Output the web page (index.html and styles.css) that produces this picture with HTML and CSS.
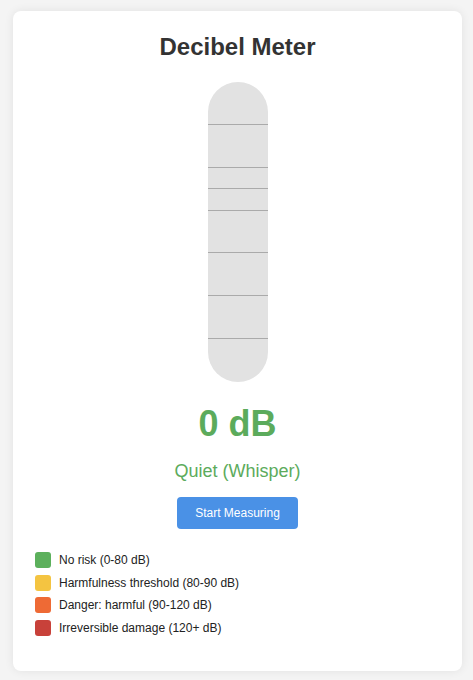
FILE: index.html
```html
<!DOCTYPE html>
<html lang="en">
<head>
<meta charset="utf-8">
<title>Decibel Meter</title>
<link rel="stylesheet" href="styles.css">
</head>
<body>
<div class="card">
  <h1 class="title">Decibel Meter</h1>
  <div class="meter">
    <div class="mark" style="bottom:14.286%"></div>
    <div class="mark" style="bottom:28.571%"></div>
    <div class="mark" style="bottom:42.857%"></div>
    <div class="mark" style="bottom:57.143%"></div>
    <div class="mark" style="bottom:64.286%"></div>
    <div class="mark" style="bottom:71.429%"></div>
    <div class="mark" style="bottom:85.714%"></div>
  </div>
  <div class="value">0 dB</div>
  <div class="status">Quiet (Whisper)</div>
  <button class="btn">Start Measuring</button>
  <ul class="legend">
    <li class="legend-item"><span class="swatch green"></span>No risk (0-80 dB)</li>
    <li class="legend-item"><span class="swatch yellow"></span>Harmfulness threshold (80-90 dB)</li>
    <li class="legend-item"><span class="swatch orange"></span>Danger: harmful (90-120 dB)</li>
    <li class="legend-item"><span class="swatch red"></span>Irreversible damage (120+ dB)</li>
  </ul>
</div>
</body>
</html>
```
FILE: styles.css
```css
html, body {
  margin: 0;
  padding: 0;
}
body {
  background: #f4f4f4;
  font-family: "Liberation Sans", Arial, Helvetica, sans-serif;
  color: #333;
  padding: 11px 0 9px 13px;
}
.card {
  width: 449px;
  height: 660px;
  box-sizing: border-box;
  background: #fff;
  border-radius: 8px;
  box-shadow: 0 0 10px rgba(0, 0, 0, 0.08);
  padding: 22px 22px 0 22px;
  display: flex;
  flex-direction: column;
  align-items: center;
}
.title {
  margin: 0;
  font-size: 24px;
  font-weight: bold;
  color: #333;
  line-height: 28px;
}
.meter {
  position: relative;
  margin-top: 21px;
  width: 60px;
  height: 300px;
  border-radius: 30px;
  background: #e2e2e2;
  overflow: hidden;
}
.mark {
  position: absolute;
  left: 0;
  right: 0;
  height: 1px;
  background: #aaaaaa;
}
.value {
  margin-top: 21px;
  font-size: 36px;
  font-weight: bold;
  color: #5cab5c;
  line-height: 41px;
}
.status {
  margin-top: 17px;
  font-size: 18px;
  color: #5cab5c;
  line-height: 21px;
}
.btn {
  margin-top: 15px;
  width: 121px;
  height: 32px;
  border: none;
  border-radius: 4px;
  background: #4a91e6;
  color: #fff;
  font-family: "Liberation Sans", Arial, Helvetica, sans-serif;
  font-size: 12px;
  padding: 0;
}
.legend {
  align-self: stretch;
  list-style: none;
  margin: 23px 0 0 0;
  padding: 0;
  display: flex;
  flex-direction: column;
  gap: 6.5px;
}
.legend-item {
  display: flex;
  align-items: center;
  gap: 8px;
  font-size: 12px;
  color: #222;
  height: 16px;
}
.swatch {
  width: 16px;
  height: 16px;
  border-radius: 3px;
  flex: none;
}
.green { background: #5cb05c; }
.yellow { background: #f4c441; }
.orange { background: #ee6a35; }
.red { background: #c8413a; }
```
